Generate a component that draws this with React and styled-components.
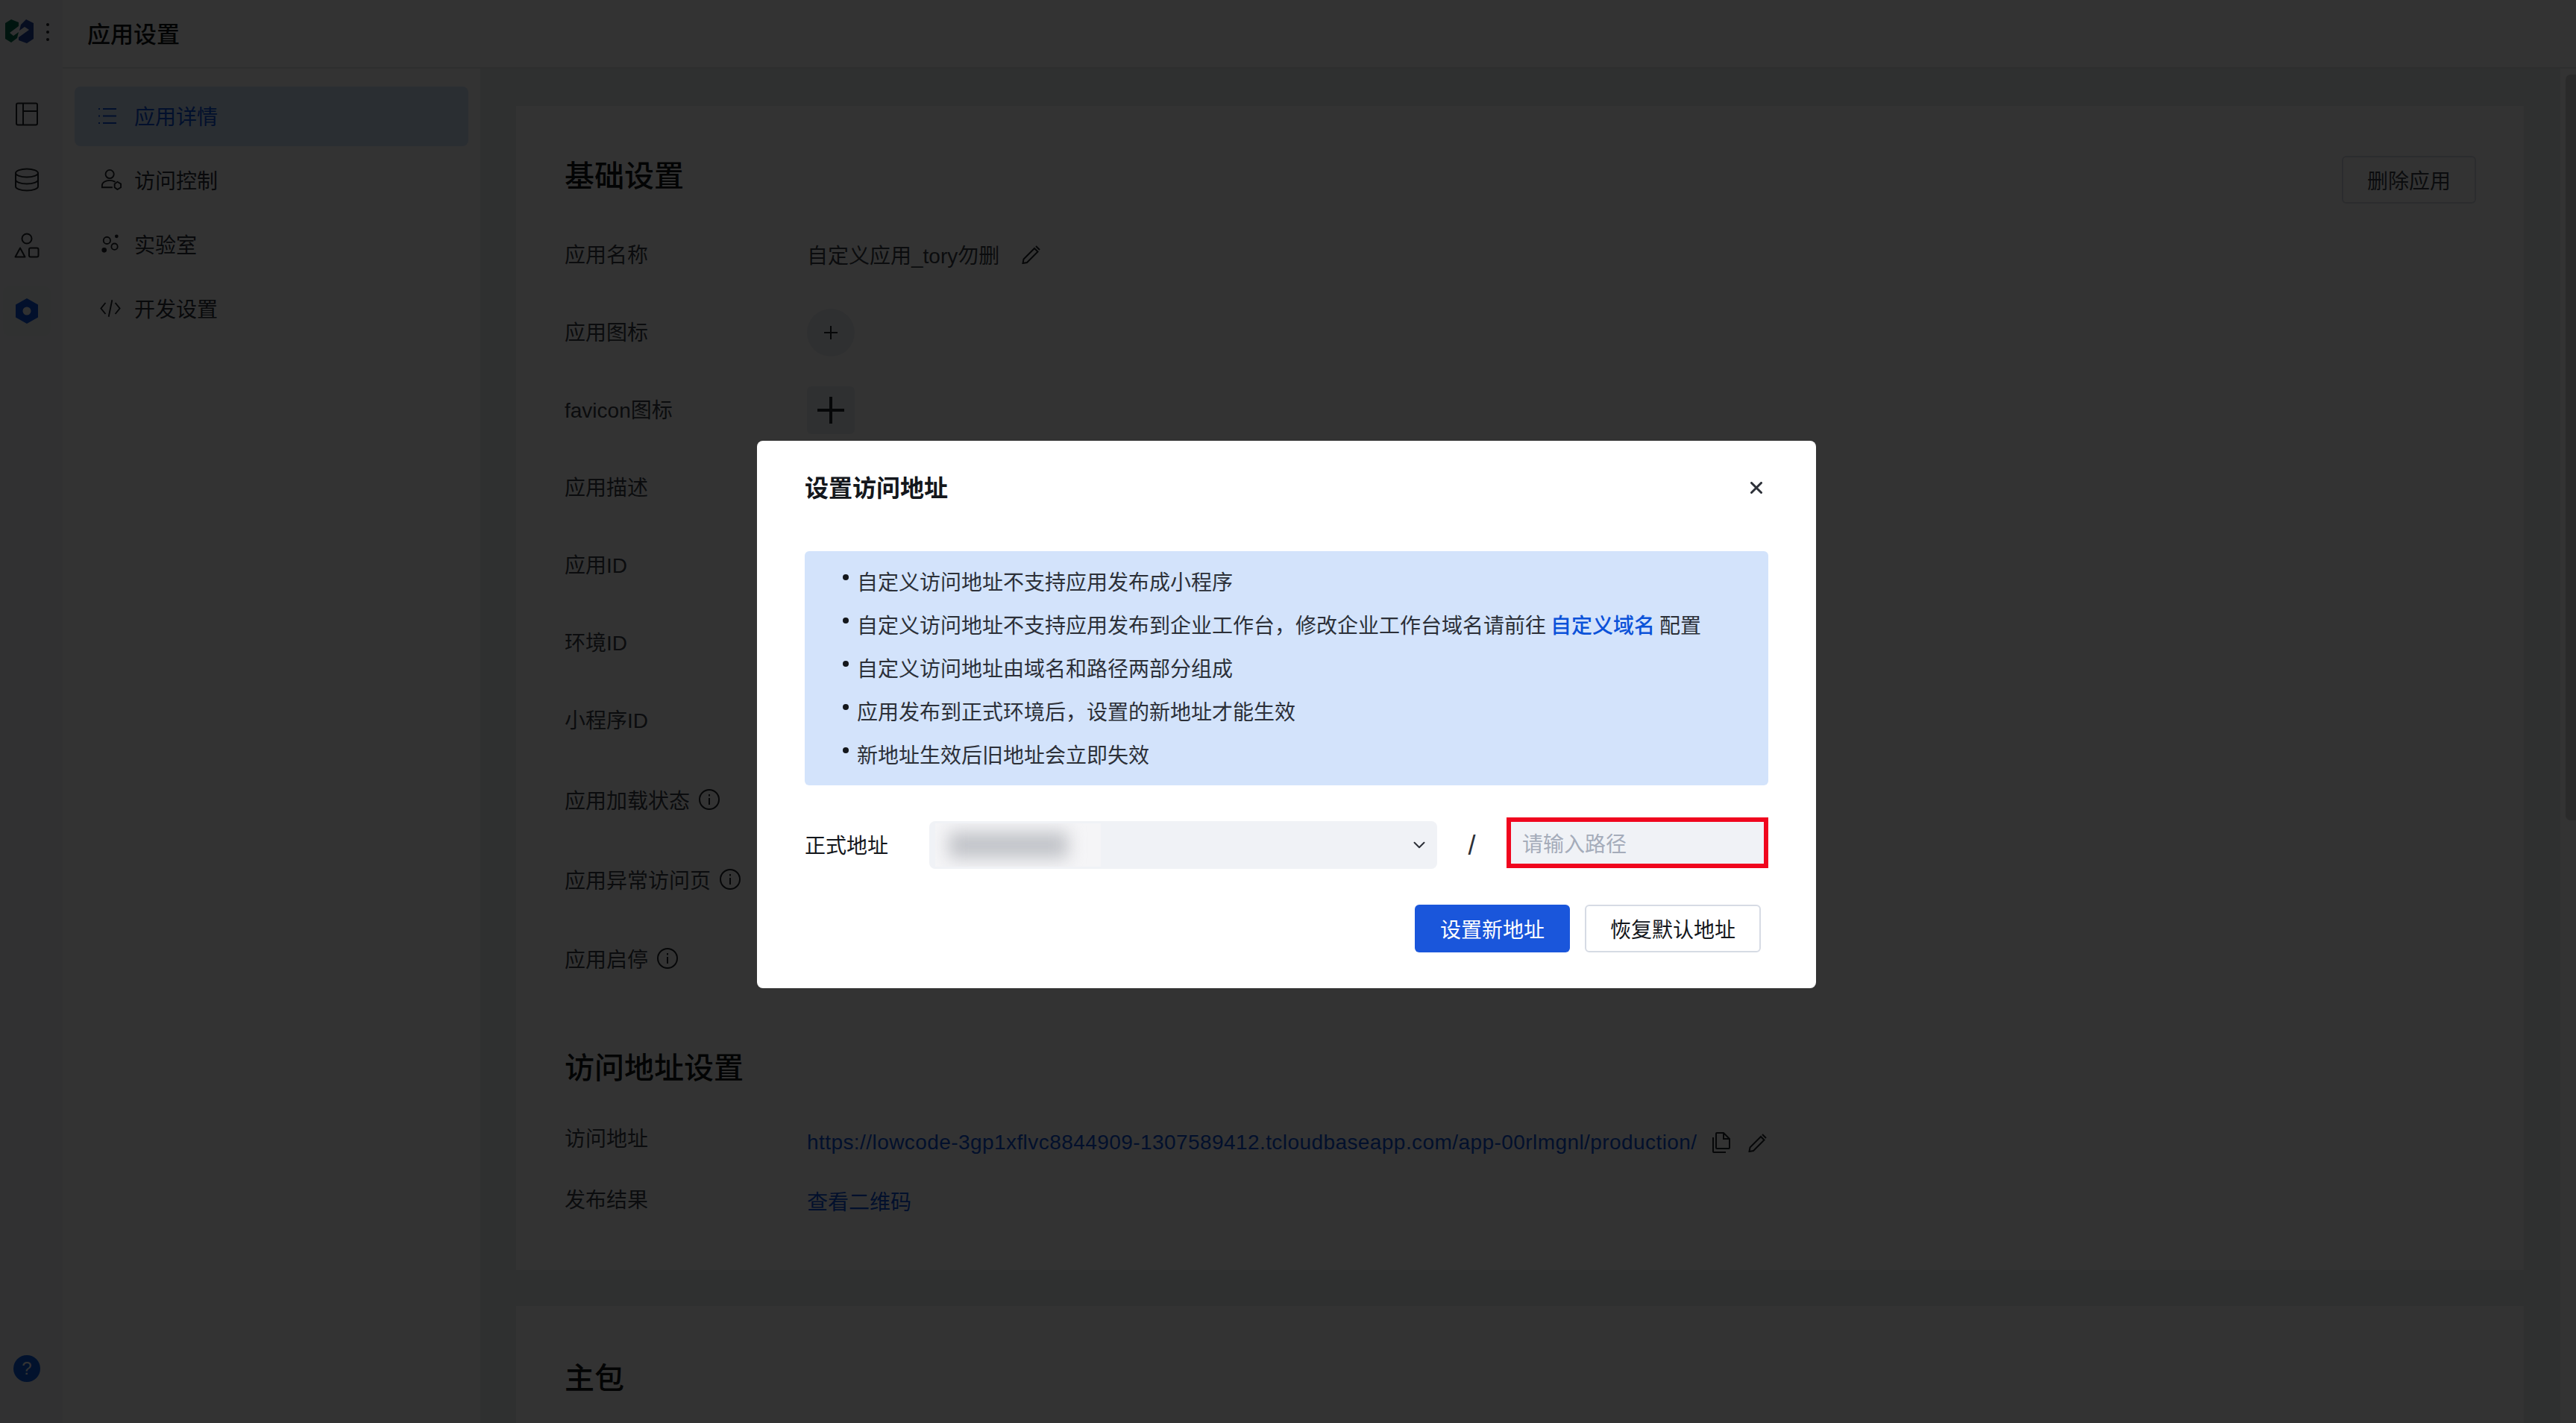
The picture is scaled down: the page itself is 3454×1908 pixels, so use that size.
import React from "react"
import styled, { createGlobalStyle } from "styled-components"
import { ChevronDown } from "lucide-react"

const GlobalStyle = createGlobalStyle`
  html, body {
    margin: 0;
    padding: 0;
    height: 100%;
    overflow: hidden;
    background: #ebedf0;
    font-family: "Liberation Sans", "Noto Sans CJK SC", sans-serif;
    font-size: 28px;
    color: #1f2329;
  }
  * { box-sizing: border-box; }
`

const Page = styled.div`
  display: flex;
  width: 3454px;
  height: 1908px;
  overflow: hidden;
`

const Rail = styled.aside`
  flex: 0 0 84px;
  display: flex;
  flex-direction: column;
  align-items: flex-start;
  padding-left: 4px;
  background: #f6f6f8;
`

const LogoRow = styled.div`
  display: flex;
  align-items: flex-start;
  gap: 17px;
  padding: 26px 0 0 3px;
  height: 120px;
`

const LogoDots = styled.div`
  display: flex;
  flex-direction: column;
  gap: 6px;
  padding-top: 5px;
  i {
    display: block;
    width: 4px;
    height: 4px;
    border-radius: 50%;
    background: #1f2329;
  }
`

const RailItem = styled.div`
  width: 64px;
  height: 66px;
  margin-bottom: 22px;
  display: flex;
  align-items: center;
  justify-content: center;
  border-radius: 8px;
  background: ${p => (p.$active ? "#f0f2f5" : "transparent")};
`

const HelpDot = styled.div`
  margin: auto 0 55px 14px;
  width: 36px;
  height: 36px;
  border-radius: 50%;
  background: #0b5ce0;
  color: #fff;
  display: flex;
  align-items: center;
  justify-content: center;
  font-size: 24px;
  line-height: 1;
`

const MainColumn = styled.div`
  flex: 1;
  display: flex;
  flex-direction: column;
  min-width: 0;
`

const TopBar = styled.header`
  flex: 0 0 92px;
  display: flex;
  align-items: center;
  padding: 0 0 4px 33px;
  background: #fff;
  border-bottom: 2px solid #e6e8ec;
  font-size: 31px;
  font-weight: 500;
  color: #111418;
`

const Body = styled.div`
  flex: 1;
  display: flex;
  min-height: 0;
`

const SideNav = styled.nav`
  flex: 0 0 560px;
  display: flex;
  flex-direction: column;
  gap: 6px;
  padding: 24px 16px 0;
  background: #fff;
`

const NavItem = styled.div`
  height: 80px;
  display: flex;
  align-items: center;
  gap: 20px;
  padding: 0 0 2px 30px;
  border-radius: 8px;
  background: ${p => (p.$active ? "#d3e3fb" : "transparent")};
  color: ${p => (p.$active ? "#0b52d9" : "#2c3038")};
`

const NavIcon = styled.span`
  flex: 0 0 30px;
  min-width: 0;
  display: flex;
  justify-content: flex-start;
  padding-left: ${p => p.$shift}px;
  svg { flex: none; }
`

const Content = styled.main`
  flex: 1;
  display: flex;
  flex-direction: column;
  gap: 48px;
  padding: 50px 49px 0 48px;
  overflow: hidden;
`

const Panel = styled.section`
  flex: 0 0 auto;
  background: #fff;
  padding: ${p => p.$top}px 64px 0 65px;
  height: ${p => p.$height}px;
`

const PanelHead = styled.div`
  display: flex;
  justify-content: space-between;
  align-items: flex-start;
`

const SectionTitle = styled.h2`
  margin: ${p => p.$top || 0}px 0 0;
  font-size: 40px;
  line-height: 54px;
  font-weight: 500;
  color: #111418;
`

const GhostButton = styled.button`
  width: 180px;
  height: 64px;
  border: 2px solid #d7dbe3;
  border-radius: 6px;
  background: #fff;
  color: #3a3f48;
  font: inherit;
`

const Rows = styled.div`
  display: flex;
  flex-direction: column;
  gap: 40px;
  margin-top: 37px;
`

const Row = styled.div`
  display: flex;
  align-items: center;
  height: ${p => p.$height || 64}px;
`

const LabelCell = styled.div`
  flex: 0 0 325px;
  display: flex;
  align-items: center;
  gap: 12px;
  padding-bottom: 4px;
  color: #3a3f48;
`

const ValueCell = styled.div`
  display: flex;
  align-items: center;
  gap: 30px;
  padding-bottom: 2px;
  color: #3a3f48;
`

const AddCircle = styled.div`
  width: 64px;
  height: 64px;
  display: flex;
  align-items: center;
  justify-content: center;
  background: #eceef2;
  border-radius: ${p => (p.$square ? "6px" : "50%")};
`

const AddressRows = styled.div`
  display: flex;
  flex-direction: column;
  gap: 36px;
  margin-top: 49px;
`

const AddressRow = styled.div`
  display: flex;
  align-items: flex-start;
  line-height: 40px;
  height: ${p => p.$height}px;
`

const AddressValue = styled.div`
  display: flex;
  align-items: center;
  gap: 20px;
  margin-top: ${p => p.$offset}px;
`

const LinkText = styled.a`
  color: #0b52d9;
  letter-spacing: ${p => (p.$wide ? "0.43px" : "0")};
`

const EditSlot = styled.span`
  display: flex;
  margin-left: 4px;
`

const ScrollStrip = styled.div`
  flex: 0 0 21px;
  padding: 8px 0 0 7px;
  background: #fff;
`

const ScrollThumb = styled.div`
  width: 14px;
  height: 1000px;
  border-radius: 7px 0 0 7px;
  background: #cfcfcf;
`

const Overlay = styled.div`
  position: fixed;
  inset: 0;
  display: flex;
  align-items: center;
  justify-content: center;
  padding: 8px 4px 0 0;
  background: rgba(0, 0, 0, 0.8);
`

const Modal = styled.div`
  width: 1420px;
  height: 734px;
  padding: 41px 64px 0;
  background: #fff;
  border-radius: 8px;
`

const ModalHead = styled.div`
  display: flex;
  justify-content: space-between;
  align-items: center;
  height: 44px;
  padding-right: 8px;
`

const ModalTitle = styled.h3`
  margin: 0 0 4px;
  font-size: 32px;
  font-weight: 600;
  color: #14171c;
`

const Notice = styled.ul`
  margin: 63px 0 0;
  padding: 12px 0 12px 51px;
  list-style: none;
  background: #d3e3fb;
  border-radius: 6px;
`

const NoticeLine = styled.li`
  display: flex;
  align-items: center;
  gap: 11px;
  height: 58px;
  padding-bottom: 2px;
  color: #2c3038;
`

const NoticeDot = styled.span`
  flex: 0 0 8px;
  height: 8px;
  margin-bottom: 10px;
  border-radius: 50%;
  background: #14171c;
`

const NoticeLink = styled.a`
  color: #0b52d9;
  font-weight: 500;
  margin: 0 6px;
`

const FormRow = styled.div`
  display: flex;
  align-items: flex-start;
  margin-top: 43px;
  height: 69px;
`

const FormLabel = styled.label`
  flex: 0 0 167px;
  line-height: 64px;
  margin-top: 7px;
  color: #14171c;
`

const FakeSelect = styled.div`
  flex: 0 0 681px;
  height: 64px;
  margin-top: 5px;
  display: flex;
  align-items: center;
  justify-content: space-between;
  padding: 0 11px 0 8px;
  background: #f0f2f6;
  border-radius: 8px;
  color: #2c3038;
`

const BlurPatch = styled.div`
  width: 222px;
  height: 58px;
  display: flex;
  align-items: center;
  overflow: hidden;
  padding-left: 18px;
  background: #f5f5f7;
`

const BlurBlob = styled.div`
  width: 160px;
  height: 36px;
  background: #c2c4c9;
  filter: blur(11px);
`

const Slash = styled.span`
  flex: 0 0 93px;
  margin-top: 6px;
  line-height: 64px;
  font-size: 36px;
  text-align: center;
  color: #2c3038;
`

const PathInput = styled.input`
  flex: 0 0 351px;
  width: 351px;
  min-width: 0;
  height: 68px;
  padding: 6px 8px 0 15px;
  margin: 0;
  border: 6px solid #f0061e;
  outline: none;
  background: #f0f2f6;
  font: inherit;
  color: #14171c;
  &::placeholder {
    color: #a5acba;
    opacity: 1;
  }
`

const ModalFoot = styled.div`
  display: flex;
  justify-content: flex-end;
  gap: 20px;
  margin-top: 48px;
  padding-right: 10px;
`

const FootButton = styled.button`
  width: ${p => p.$width}px;
  height: 64px;
  border-radius: 6px;
  font: inherit;
  border: ${p => (p.$primary ? "none" : "2px solid #d6dbe4")};
  background: ${p => (p.$primary ? "#1a56db" : "#fff")};
  color: ${p => (p.$primary ? "#fff" : "#14171c")};
`

const Logo = () => (
  <svg width="38" height="32" viewBox="0 0 38 32">
    <path d="M8 0 L18 4 L18 9 L6 18 L11 22 L18 17 L16 25 L8 31 L0 26 L0 5 Z" fill="#046c4e" />
    <path d="M28 0 L38 5 L38 26 L29 32 L18 28 L18 24 L32 14 L26 10 L19 15 L21 7 Z" fill="#1e429f" />
  </svg>
)

const RailLayoutIcon = () => (
  <svg width="32" height="32" viewBox="0 0 32 32" fill="none" stroke="#1f2329" strokeWidth="2">
    <rect x="2" y="1.5" width="28" height="29" rx="2" />
    <path d="M11 1.5 V30.5 M11 12 H30" />
  </svg>
)

const RailDbIcon = () => (
  <svg width="34" height="32" viewBox="0 0 34 32" fill="none" stroke="#1f2329" strokeWidth="2">
    <ellipse cx="17" cy="7" rx="15" ry="5.5" />
    <path d="M2 7 V25 C2 28 8.5 30.5 17 30.5 S32 28 32 25 V7" />
    <path d="M2 16 C2 19 8.5 21.5 17 21.5 S32 19 32 16" />
  </svg>
)

const RailShapesIcon = () => (
  <svg width="34" height="34" viewBox="0 0 34 34" fill="none" stroke="#1f2329" strokeWidth="2">
    <circle cx="17" cy="8" r="6.5" />
    <path d="M8 20.5 L14.5 32.5 H1.5 Z" strokeLinejoin="round" />
    <rect x="20" y="20.5" width="12.5" height="12" rx="2" />
  </svg>
)

const RailHexIcon = () => (
  <svg width="32" height="34" viewBox="0 0 32 34">
    <path
      fillRule="evenodd"
      fill="#0b52d9"
      d="M16 0 L31 8.5 V25.5 L16 34 L1 25.5 V8.5 Z M16 11.5 A5.5 5.5 0 1 0 16 22.5 A5.5 5.5 0 1 0 16 11.5 Z"
    />
  </svg>
)

const ListIcon = () => (
  <svg width="24" height="23" viewBox="0 0 24 23" fill="none" stroke="#0b52d9" strokeWidth="2">
    <path d="M6 2 H24 M6 11.5 H24 M6 21 H24 M0 2 H2 M0 11.5 H2 M0 21 H2" />
  </svg>
)

const UserShieldIcon = () => (
  <svg width="28" height="28" viewBox="0 0 30 30" fill="none" stroke="#1f2329" strokeWidth="2">
    <circle cx="13" cy="7" r="6" />
    <path d="M21 18 C18 16.5 15 16 13 16 C7 16 2 19 2 23 V26 H17" />
    <path d="M24 18 L29 21 V26 L24 29 L20 26 V21 Z" />
  </svg>
)

const LabIcon = () => (
  <svg width="24" height="26" viewBox="0 0 26 28" fill="none" stroke="#1f2329" strokeWidth="2">
    <circle cx="8" cy="9" r="5" />
    <circle cx="19" cy="18" r="4.5" />
    <circle cx="22" cy="3" r="1.6" fill="#1f2329" />
    <circle cx="4" cy="23" r="2.6" fill="#1f2329" />
  </svg>
)

const CodeIcon = () => (
  <svg width="28" height="25" viewBox="0 0 30 26" fill="none" stroke="#1f2329" strokeWidth="2">
    <path d="M8 5 L1.5 13 L8 21 M22 5 L28.5 13 L22 21 M17.5 1 L12.5 25" />
  </svg>
)

const PencilIcon = ({ size = 25 }) => (
  <svg width={size} height={size} viewBox="0 0 25 25" fill="none" stroke="#1f2329" strokeWidth="2">
    <path d="M17 4 L21.5 8.5 L7 23 L1.5 24 L2.5 18.5 Z M19 1 L24 6" />
  </svg>
)

const CopyIcon = () => (
  <svg width="24" height="28" viewBox="0 0 24 28" fill="none" stroke="#1f2329" strokeWidth="2">
    <path d="M5 2 Q5 1 6 1 H15 L23 9 V21 Q23 22 22 22 H6 Q5 22 5 21 Z M15 1 V9 H23" />
    <path d="M1 7 V26 Q1 27 2 27 H18" />
  </svg>
)

const InfoIcon = () => (
  <svg width="28" height="28" viewBox="0 0 28 28" fill="none" stroke="#1f2329" strokeWidth="2">
    <circle cx="14" cy="14" r="13" />
    <path d="M14 12 V21 M14 7 V9.4" />
  </svg>
)

const PlusIcon = ({ size, weight }) => (
  <svg width={size} height={size} viewBox={`0 0 ${size} ${size}`} stroke="#1f2329" strokeWidth={weight}>
    <path d={`M${size / 2} 0 V${size} M0 ${size / 2} H${size}`} />
  </svg>
)

const CloseIcon = () => (
  <svg width="16" height="16" viewBox="0 0 16 16" stroke="#2c3038" strokeWidth="3" strokeLinecap="round">
    <path d="M1.5 1.5 L14.5 14.5 M14.5 1.5 L1.5 14.5" />
  </svg>
)

const navItems = [
  { text: "应用详情", icon: <ListIcon />, shift: 2, active: true },
  { text: "访问控制", icon: <UserShieldIcon />, shift: 5 },
  { text: "实验室", icon: <LabIcon />, shift: 6 },
  { text: "开发设置", icon: <CodeIcon />, shift: 4 },
]

const infoRows = [
  { label: "应用描述" },
  { label: "应用ID" },
  { label: "环境ID" },
  { label: "小程序ID" },
  { label: "应用加载状态", height: 71, info: true },
  { label: "应用异常访问页", info: true },
  { label: "应用启停", height: 67, info: true },
]

const notices = [
  "自定义访问地址不支持应用发布成小程序",
  <>
    自定义访问地址不支持应用发布到企业工作台，修改企业工作台域名请前往
    <NoticeLink>自定义域名</NoticeLink>配置
  </>,
  "自定义访问地址由域名和路径两部分组成",
  "应用发布到正式环境后，设置的新地址才能生效",
  "新地址生效后旧地址会立即失效",
]

export default function App() {
  return (
    <>
      <GlobalStyle />
      <Page>
        <Rail>
          <LogoRow>
            <Logo />
            <LogoDots><i /><i /><i /></LogoDots>
          </LogoRow>
          <RailItem><RailLayoutIcon /></RailItem>
          <RailItem><RailDbIcon /></RailItem>
          <RailItem><RailShapesIcon /></RailItem>
          <RailItem $active><RailHexIcon /></RailItem>
          <HelpDot>?</HelpDot>
        </Rail>
        <MainColumn>
          <TopBar>应用设置</TopBar>
          <Body>
            <SideNav>
              {navItems.map(item => (
                <NavItem key={item.text} $active={item.active}>
                  <NavIcon $shift={item.shift}>{item.icon}</NavIcon>
                  {item.text}
                </NavItem>
              ))}
            </SideNav>
            <Content>
              <Panel $top={67} $height={1561}>
                <PanelHead>
                  <SectionTitle>基础设置</SectionTitle>
                  <GhostButton>删除应用</GhostButton>
                </PanelHead>
                <Rows>
                  <Row>
                    <LabelCell>应用名称</LabelCell>
                    <ValueCell>自定义应用_tory勿删 <PencilIcon /></ValueCell>
                  </Row>
                  <Row>
                    <LabelCell>应用图标</LabelCell>
                    <AddCircle><PlusIcon size={18} weight={2} /></AddCircle>
                  </Row>
                  <Row>
                    <LabelCell>favicon图标</LabelCell>
                    <AddCircle $square><PlusIcon size={36} weight={4} /></AddCircle>
                  </Row>
                  {infoRows.map(row => (
                    <Row key={row.label} $height={row.height}>
                      <LabelCell>
                        {row.label}
                        {row.info && <InfoIcon />}
                      </LabelCell>
                    </Row>
                  ))}
                </Rows>
                <SectionTitle $top={85}>访问地址设置</SectionTitle>
                <AddressRows>
                  <AddressRow $height={46}>
                    <LabelCell>访问地址</LabelCell>
                    <AddressValue $offset={4}>
                      <LinkText $wide>https://lowcode-3gp1xflvc8844909-1307589412.tcloudbaseapp.com/app-00rlmgnl/production/</LinkText>
                      <CopyIcon />
                      <EditSlot><PencilIcon /></EditSlot>
                    </AddressValue>
                  </AddressRow>
                  <AddressRow $height={46}>
                    <LabelCell>发布结果</LabelCell>
                    <AddressValue $offset={3}>
                      <LinkText>查看二维码</LinkText>
                    </AddressValue>
                  </AddressRow>
                </AddressRows>
              </Panel>
              <Panel $top={70} $height={300}>
                <SectionTitle>主包</SectionTitle>
              </Panel>
            </Content>
            <ScrollStrip><ScrollThumb /></ScrollStrip>
          </Body>
        </MainColumn>
      </Page>
      <Overlay>
        <Modal>
          <ModalHead>
            <ModalTitle>设置访问地址</ModalTitle>
            <CloseIcon />
          </ModalHead>
          <Notice>
            {notices.map((line, i) => (
              <NoticeLine key={i}>
                <NoticeDot />
                <span>{line}</span>
              </NoticeLine>
            ))}
          </Notice>
          <FormRow>
            <FormLabel>正式地址</FormLabel>
            <FakeSelect>
              <BlurPatch><BlurBlob /></BlurPatch>
              <ChevronDown size={26} strokeWidth={1.8} />
            </FakeSelect>
            <Slash>/</Slash>
            <PathInput placeholder="请输入路径" />
          </FormRow>
          <ModalFoot>
            <FootButton $primary $width={208}>设置新地址</FootButton>
            <FootButton $width={236}>恢复默认地址</FootButton>
          </ModalFoot>
        </Modal>
      </Overlay>
    </>
  )
}
